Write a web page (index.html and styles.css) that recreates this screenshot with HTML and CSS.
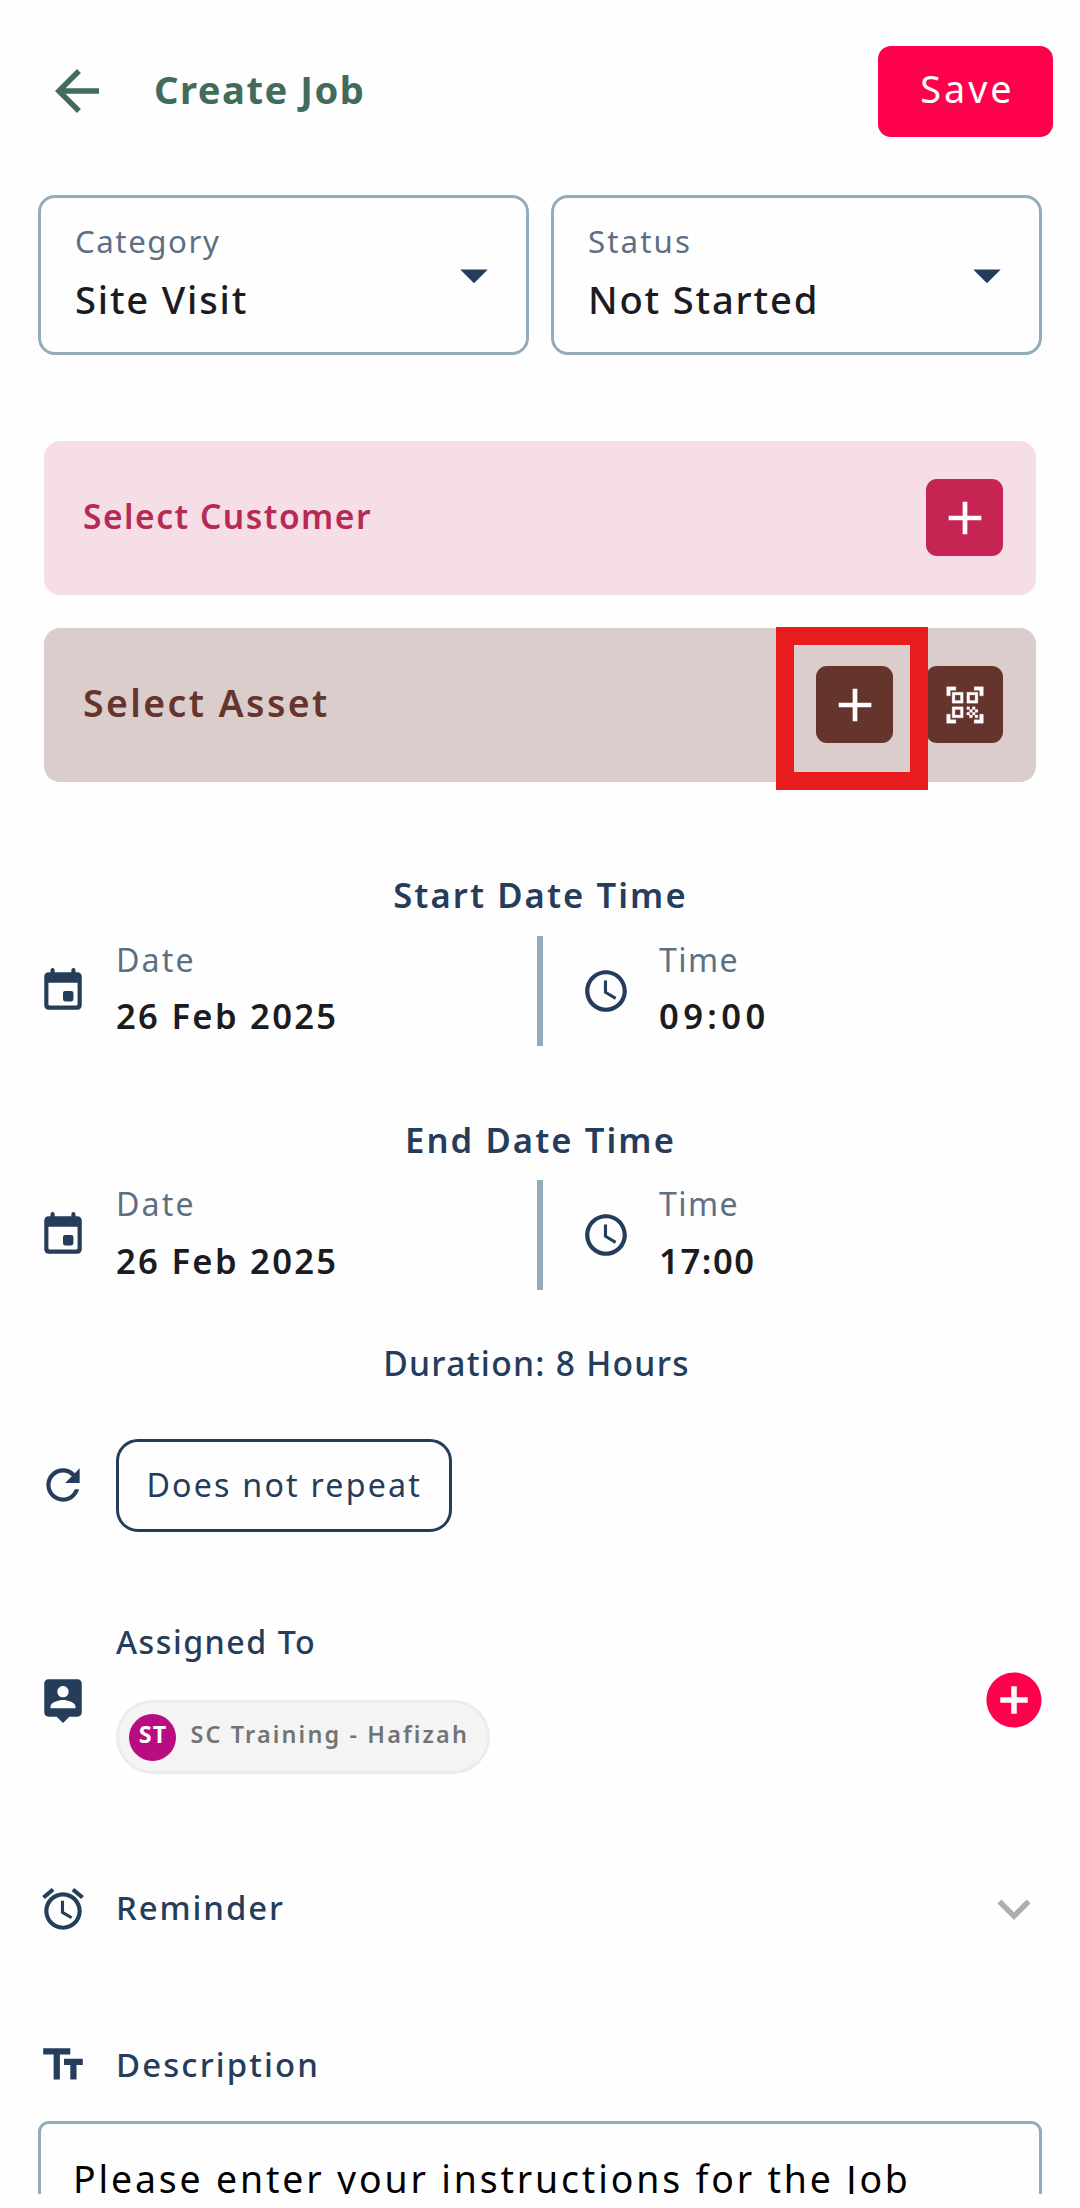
FILE: index.html
```
<!DOCTYPE html>
<html lang="en">
<head>
<meta charset="utf-8">
<title>Create Job</title>
<link rel="stylesheet" href="styles.css">
</head>
<body>
<svg class="sprite" aria-hidden="true">
  <symbol id="plus" viewBox="0 0 24 24"><path d="M19 13h-6v6h-2v-6H5v-2h6V5h2v6h6v2z"/></symbol>
  <symbol id="caret" viewBox="0 0 24 24"><path d="M7 10l5 5 5-5z"/></symbol>
  <symbol id="event" viewBox="0 0 24 24"><path fill-rule="evenodd" d="M6 2a1 1 0 0 1 2 0v1h8V2a1 1 0 0 1 2 0v1h1a2 2 0 0 1 2 2v14a2 2 0 0 1-2 2H5a2 2 0 0 1-2-2V5a2 2 0 0 1 2-2h1zM5 8v10.3a.7.7 0 0 0 .7.7h12.600a.7.7 0 0 0 .7-.7V8zM13 12h3a1 1 0 0 1 1 1v3a1 1 0 0 1-1 1h-3a1 1 0 0 1-1-1v-3a1 1 0 0 1 1-1z"/></symbol>
  <symbol id="clock" viewBox="0 0 24 24"><path d="M11.990 2C6.470 2 2 6.480 2 12s4.470 10 9.990 10C17.520 22 22 17.520 22 12S17.520 2 11.990 2zM12 20c-4.420 0-8-3.580-8-8s3.580-8 8-8 8 3.580 8 8-3.580 8-8 8zM12.500 7H11v6l5.250 3.150.75-1.230-4.500-2.670z"/></symbol>
</svg>

<main class="screen">
  <header class="topbar">
    <svg class="icon-lg back" viewBox="0 0 24 24"><path d="M20 11H7.830l5.590-5.590L12 4l-8 8 8 8 1.410-1.410L7.830 13H20v-2z"/></svg>
    <h1 class="title">Create Job</h1>
    <button class="save"><span class="save-text">Save</span></button>
  </header>

  <section class="fields">
    <div class="field">
      <div class="field-body">
        <span class="field-label category-label">Category</span>
        <span class="field-value">Site Visit</span>
      </div>
      <svg class="icon-lg"><use href="#caret"/></svg>
    </div>
    <div class="field">
      <div class="field-body">
        <span class="field-label status-label">Status</span>
        <span class="field-value">Not Started</span>
      </div>
      <svg class="icon-lg"><use href="#caret"/></svg>
    </div>
  </section>

  <section class="cards">
    <div class="card customer">
      <span class="card-text">Select Customer</span>
      <button class="square"><svg class="icon-plus"><use href="#plus"/></svg></button>
    </div>
    <div class="card asset">
      <span class="card-text">Select Asset</span>
      <button class="square"><svg class="icon-plus"><use href="#plus"/></svg></button>
      <button class="square"><svg class="icon-qr" viewBox="0 0 24 24"><path d="M9.500 6.500v3h-3v-3h3M11 5H5v6h6V5zM9.500 14.500v3h-3v-3h3M11 13H5v6h6v-6zM17.500 6.500v3h-3v-3h3M19 5h-6v6h6V5zM13 13h1.500v1.500H13zM14.500 14.500H16V16h-1.500zM16 13h1.500v1.500H16zM13 16h1.500v1.500H13zM14.500 17.500H16V19h-1.500zM16 16h1.500v1.500H16zM17.500 14.500H19V16h-1.500zM17.500 17.500H19V19h-1.500zM22 7h-2V4h-3V2h5v5zM22 22v-5h-2v3h-3v2h5zM2 22h5v-2H4v-3H2v5zM2 2v5h2V4h3V2H2z"/></svg></button>
      <div class="highlight"></div>
    </div>
  </section>

  <section class="datetime">
    <h2 class="heading">Start Date Time</h2>
    <div class="dt-row">
      <div class="dt-cell">
        <svg class="icon"><use href="#event"/></svg>
        <div class="dt-text"><span class="dt-label">Date</span><span class="dt-value">26 Feb 2025</span></div>
      </div>
      <div class="divider"></div>
      <div class="dt-cell time">
        <svg class="icon"><use href="#clock"/></svg>
        <div class="dt-text"><span class="dt-label tight">Time</span><span class="dt-value start-time">09:00</span></div>
      </div>
    </div>
  </section>

  <section class="datetime">
    <h2 class="heading">End Date Time</h2>
    <div class="dt-row">
      <div class="dt-cell">
        <svg class="icon"><use href="#event"/></svg>
        <div class="dt-text"><span class="dt-label">Date</span><span class="dt-value">26 Feb 2025</span></div>
      </div>
      <div class="divider"></div>
      <div class="dt-cell time">
        <svg class="icon"><use href="#clock"/></svg>
        <div class="dt-text"><span class="dt-label tight">Time</span><span class="dt-value end-time">17:00</span></div>
      </div>
    </div>
  </section>

  <p class="duration">Duration: 8 Hours</p>

  <section class="line repeat">
    <svg class="icon" viewBox="0 0 24 24"><path d="M17.650 6.350C16.200 4.900 14.210 4 12 4c-4.420 0-7.990 3.580-7.990 8s3.570 8 7.990 8c3.730 0 6.840-2.550 7.730-6h-2.080c-.82 2.330-3.040 4-5.650 4-3.310 0-6-2.690-6-6s2.690-6 6-6c1.660 0 3.140.69 4.220 1.780L13 11h7V4l-2.350 2.350z"/></svg>
    <button class="repeat-chip"><span class="repeat-text">Does not repeat</span></button>
  </section>

  <section class="line assigned">
    <svg class="icon" viewBox="0 0 24 24"><path d="M19 2H5c-1.110 0-2 .9-2 2v14c0 1.100.89 2 2 2h4l3 3 3-3h4c1.100 0 2-.9 2-2V4c0-1.100-.9-2-2-2zm-7 3.300c1.490 0 2.700 1.210 2.700 2.700s-1.210 2.700-2.700 2.700S9.300 9.490 9.300 8s1.210-2.700 2.700-2.700zM18 16H6v-.9c0-2 4-3.100 6-3.100s6 1.100 6 3.100v.9z"/></svg>
    <div class="assigned-body">
      <span class="assigned-label">Assigned To</span>
      <div class="person">
        <span class="avatar"><span class="initials">ST</span></span>
        <span class="person-name">SC Training - Hafizah</span>
      </div>
    </div>
    <svg class="icon-lg add" viewBox="0 0 24 24"><path d="M12 2C6.480 2 2 6.480 2 12s4.480 10 10 10 10-4.480 10-10S17.520 2 12 2zm5 11h-4v4h-2v-4H7v-2h4V7h2v4h4v2z"/></svg>
  </section>

  <section class="line reminder">
    <svg class="icon" viewBox="0 0 24 24"><path d="M22 5.720l-4.600-3.860-1.290 1.530 4.600 3.860L22 5.720zM7.880 3.390L6.600 1.860 2 5.710l1.290 1.530 4.590-3.850zM12.500 8H11v6l4.750 2.850.75-1.230-4-2.370V8zM12 4c-4.970 0-9 4.030-9 9s4.020 9 9 9c4.970 0 9-4.030 9-9s-4.030-9-9-9zm0 16c-3.870 0-7-3.130-7-7s3.130-7 7-7 7 3.130 7 7-3.130 7-7 7z"/></svg>
    <span class="line-label reminder-label">Reminder</span>
    <svg class="icon-lg chevron" viewBox="0 0 24 24"><path d="M16.590 8.590L12 13.170 7.410 8.590 6 10l6 6 6-6z"/></svg>
  </section>

  <section class="line description">
    <svg class="icon" viewBox="0 0 24 24"><path d="M2.500 4v3h5v12h3V7h5V4h-13zm19 5h-9v3h3v7h3v-7h3V9z"/></svg>
    <span class="line-label description-label">Description</span>
  </section>

  <div class="textarea">Please enter your instructions for the Job</div>
</main>
</body>
</html>
```
FILE: styles.css
```
* { box-sizing: border-box; }

body {
  margin: 0;
  background: #fefefe;
  font-family: "Noto Sans", sans-serif;
  line-height: 1;
  color: #1c1b1f;
}

h1, h2, p { margin: 0; }
svg { flex: none; display: block; fill: currentColor; }
span { display: block; white-space: nowrap; }

button {
  display: flex;
  align-items: center;
  justify-content: center;
  margin: 0;
  border: 0;
  padding: 0;
  font: inherit;
}

.sprite { position: absolute; width: 0; height: 0; }

.screen {
  width: 1080px;
  height: 2194px;
  overflow: hidden;
}

.icon { width: 50px; height: 50px; color: #253d5b; }
.icon-lg { width: 66px; height: 66px; }
.icon-plus { width: 56px; height: 56px; }
.icon-qr { width: 44px; height: 44px; stroke: #fff; stroke-width: .15; }

/* Top bar */
.topbar {
  display: flex;
  align-items: center;
  height: 195px;
  padding: 0 27px 13px 44px;
}
.back { color: #426b5b; }
.title {
  flex: 1;
  margin-left: 44px;
  padding-bottom: 4px;
  font-size: 38.2px;
  font-weight: 700;
  letter-spacing: 1.5px;
  color: #426b5b;
}
.save {
  width: 175px;
  height: 91px;
  border-radius: 13px;
  background: #ff004d;
  color: #fff;
}
.save-text {
  padding: 0 0 4px 4px;
  font-size: 37.8px;
  letter-spacing: 2.95px;
}

/* Category and status */
.fields {
  display: flex;
  gap: 22px;
  padding: 0 38px;
}
.field {
  flex: 1;
  display: flex;
  align-items: center;
  justify-content: space-between;
  height: 160px;
  padding: 0 19px 0 34px;
  border: 3px solid #94abba;
  border-radius: 17px;
  color: #253d5b;
}
.field-body {
  display: flex;
  flex-direction: column;
  gap: 23.3px;
  padding-bottom: 6px;
}
.field-label { font-size: 31.2px; color: #5c6f83; }
.category-label { letter-spacing: 1.57px; }
.status-label { letter-spacing: 2.12px; }
.field-value {
  font-size: 38.2px;
  font-weight: 500;
  letter-spacing: 1.8px;
  color: #1c1b1f;
}

/* Customer and asset */
.cards {
  display: flex;
  flex-direction: column;
  gap: 33.5px;
  padding: 86px 44px 0;
}
.card {
  position: relative;
  display: flex;
  align-items: center;
  gap: 33px;
  height: 153.5px;
  padding: 0 33px 0 39px;
  border-radius: 16px;
}
.card-text { flex: 1; font-weight: 600; }
.customer { background: #f5dee5; color: #b82a56; }
.customer .card-text {
  padding-bottom: 2px;
  font-size: 33.6px;
  letter-spacing: 1.49px;
}
.asset { background: #dacdcb; color: #65352d; }
.asset .card-text {
  padding-bottom: 5px;
  font-size: 37.4px;
  letter-spacing: 2.42px;
}
.square {
  width: 77px;
  height: 77px;
  border-radius: 11px;
  color: #fff;
}
.customer .square { background: #c62453; }
.asset .square { background: #65352d; }
.highlight {
  position: absolute;
  top: -1px;
  left: 731.5px;
  width: 152.5px;
  height: 163px;
  border: 18px solid #e81c1c;
}

/* Start and end */
.datetime { padding-top: 96.800px; }
.datetime + .datetime { padding-top: 76.900px; }
.heading {
  padding-left: 1px;
  font-size: 34.6px;
  font-weight: 600;
  letter-spacing: 2.1px;
  text-align: center;
  color: #253d5b;
}
.dt-row {
  display: flex;
  height: 110px;
  margin-top: 23px;
  padding-left: 38px;
}
.dt-cell {
  display: flex;
  align-items: center;
  gap: 28px;
  width: 499px;
}
.time { margin-left: 38px; width: auto; }
.divider { width: 6px; background: #94abba; }
.dt-text {
  display: flex;
  flex-direction: column;
  gap: 23px;
  padding-bottom: 4px;
}
.dt-label { font-size: 32.2px; letter-spacing: 2.11px; color: #5c6f83; }
.dt-label.tight { letter-spacing: 1.4px; }
.dt-value { font-size: 34.6px; font-weight: 600; letter-spacing: 2.3px; }
.start-time { letter-spacing: 4.4px; }
.end-time { letter-spacing: 1.6px; }

.duration {
  margin-top: 57px;
  padding-right: 7px;
  font-size: 33.6px;
  font-weight: 500;
  letter-spacing: 1.28px;
  text-align: center;
  color: #253d5b;
}

/* Icon-led rows */
.line {
  display: flex;
  align-items: center;
  gap: 28px;
  padding: 0 33px 0 38px;
  color: #253d5b;
}
.repeat { margin-top: 57.700px; }
.repeat-chip {
  width: 335.5px;
  height: 93.5px;
  border: 3px solid #253d5b;
  border-radius: 22px;
  background: none;
  color: #253d5b;
}
.repeat-text { padding: 0 0 0 1px; font-size: 32.2px; letter-spacing: 2.2px; }

.assigned { margin-top: 94px; }
.assigned-body {
  flex: 1;
  display: flex;
  flex-direction: column;
  align-items: flex-start;
  gap: 41.4px;
}
.assigned-label { font-size: 32.2px; font-weight: 500; letter-spacing: 1.52px; }
.person {
  display: flex;
  align-items: center;
  gap: 14.5px;
  width: 374px;
  height: 74.7px;
  padding-left: 10px;
  border: 3px solid #ececec;
  border-radius: 38px;
  background: #f4f4f4;
}
.avatar {
  display: flex;
  align-items: center;
  justify-content: center;
  width: 47px;
  height: 47px;
  border-radius: 50%;
  background: #b80c80;
}
.initials {
  padding: 0 0 4px 1px;
  font-size: 23.4px;
  font-weight: 700;
  letter-spacing: 1.1px;
  color: #fff;
}
.person-name {
  padding-bottom: 4px;
  font-size: 23.4px;
  font-weight: 600;
  letter-spacing: 2.15px;
  color: #737373;
}
.add { color: #ff004d; }

.reminder { margin-top: 109.600px; height: 49.5px; }
.line-label { flex: 1; font-size: 32.9px; font-weight: 500; }
.reminder-label { padding-bottom: 1px; letter-spacing: 1.92px; }
.chevron { color: #adafae; }

.description { margin-top: 107px; height: 49.5px; }
.description-label { letter-spacing: 2.15px; }

.textarea {
  height: 200px;
  margin: 30.5px 38px 0;
  padding: 36px 32px;
  border: 3px solid #94abba;
  border-radius: 11px;
  font-size: 37.4px;
  letter-spacing: 2.85px;
  white-space: nowrap;
  color: #000;
}
```
